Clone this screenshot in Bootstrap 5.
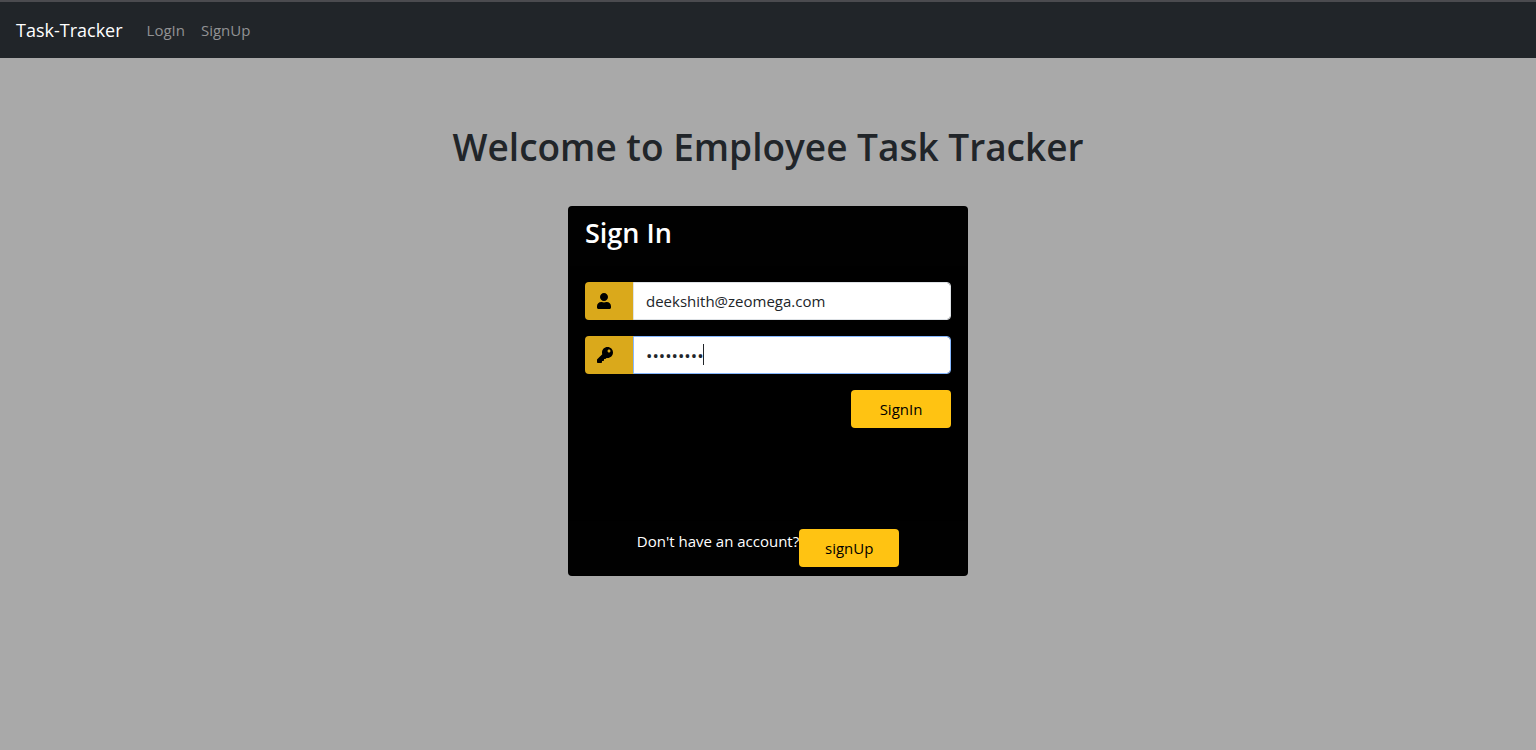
<!DOCTYPE html>
<html lang="en">
<head>
<meta charset="utf-8">
<meta name="viewport" content="width=device-width, initial-scale=1">
<title>Task-Tracker</title>
<link rel="stylesheet" href="https://cdn.jsdelivr.net/npm/bootstrap@5.3.0/dist/css/bootstrap.min.css">
<style>
  body { background: #a9a9a9; font-family: "Open Sans", "Noto Sans", sans-serif; font-size: 15px; line-height: 24px; }
  .topbar { border-top: 2px solid #4b4b4f; background: #212529; }
  .topbar .navbar-brand { font-size: 18px; line-height: 30px; margin-right: 16px; }
  .topbar .nav-link { color: #919294; }
  .page-title { font-size: 37px; line-height: 48px; font-weight: 600; color: #212529; margin-top: 65px; margin-bottom: 35px; }
  .login-card { max-width: 400px; min-height: 370px; background: #000; border-radius: 4px; }
  .login-card .card-title { font-size: 27px; line-height: 35px; font-weight: 600; }
  .login-card .input-group-text { width: 49px; background: #daa91b; border: 0; border-radius: 4px; color: #000; }
  .login-card .form-control { height: 38px; font-size: 15px; line-height: 24px; border-radius: 4px; color: #212529; }
  .login-card .form-control:focus { border-color: #86b7fe; box-shadow: none; }
  .login-card .form-control[type="password"] { font-size: 17px; caret-color: transparent; }
  .text-caret { left: 119px; top: 8px; width: 1px; height: 21px; background: #212529; z-index: 6; }
  .login-card .btn { width: 100px; height: 38px; font-size: 15px; line-height: 24px; border-radius: 4px; background: #ffc312; color: #000; }
</style>
</head>
<body>
<nav class="navbar navbar-expand navbar-dark topbar">
  <div class="container-fluid px-3">
    <a class="navbar-brand" href="#">Task-Tracker</a>
    <ul class="navbar-nav me-auto">
      <li class="nav-item"><a class="nav-link" href="#">LogIn</a></li>
      <li class="nav-item"><a class="nav-link" href="#">SignUp</a></li>
    </ul>
  </div>
</nav>
<main class="container">
  <h1 class="page-title text-center">Welcome to Employee Task Tracker</h1>
  <div class="card login-card mx-auto">
    <div class="card-header border-bottom-0">
      <h3 class="card-title text-white mb-2">Sign In</h3>
    </div>
    <div class="card-body">
      <form>
        <div class="input-group mb-3">
          <label class="input-group-text" for="email" aria-label="Email">
            <svg width="14" height="16" viewBox="0 0 448 512" fill="currentColor" aria-hidden="true"><path d="M224 256c70.7 0 128-57.300 128-128S294.700 0 224 0 96 57.300 96 128s57.300 128 128 128zm89.600 32h-16.700c-22.200 10.200-46.900 16-72.900 16s-50.600-5.800-72.900-16h-16.700C60.200 288 0 348.200 0 422.400V464c0 26.500 21.500 48 48 48h352c26.500 0 48-21.500 48-48v-41.600c0-74.200-60.200-134.400-134.400-134.400z"/></svg>
          </label>
          <input class="form-control" type="email" id="email" value="deekshith@zeomega.com">
        </div>
        <div class="input-group mb-3">
          <label class="input-group-text" for="password" aria-label="Password">
            <svg width="16" height="16" viewBox="0 0 512 512" fill="currentColor" aria-hidden="true"><path d="M512 176.001C512 273.203 433.202 352 336 352c-11.220 0-22.190-1.062-32.827-3.069l-24.012 27.014A23.999 23.999 0 0 1 261.223 384H224v40c0 13.255-10.745 24-24 24h-40v40c0 13.255-10.745 24-24 24H24c-13.255 0-24-10.745-24-24v-78.059c0-6.365 2.529-12.470 7.029-16.971l161.802-161.802C163.108 213.814 160 195.271 160 176 160 78.798 238.797.001 335.999 0 433.488-.001 512 78.511 512 176.001zM336 128c0 26.510 21.490 48 48 48s48-21.490 48-48-21.490-48-48-48-48 21.490-48 48z"/></svg>
          </label>
          <span class="text-caret position-absolute" aria-hidden="true"></span>
          <input class="form-control" type="password" id="password" value="tracker12" autofocus>
        </div>
        <div class="d-flex justify-content-end">
          <button class="btn" type="submit">SignIn</button>
        </div>
      </form>
    </div>
    <div class="card-footer border-top-0 d-flex justify-content-center">
      <span class="text-white">Don't have an account?</span>
      <button class="btn" type="button">signUp</button>
    </div>
  </div>
</main>
<script src="https://cdn.jsdelivr.net/npm/bootstrap@5.3.0/dist/js/bootstrap.bundle.min.js"></script>
</body>
</html>
